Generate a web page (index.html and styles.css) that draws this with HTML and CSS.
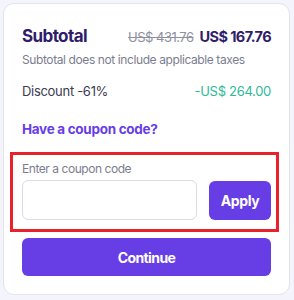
FILE: index.html
```html
<!DOCTYPE html>
<html lang="en">
<head>
<meta charset="utf-8">
<title>Order summary</title>
<link rel="stylesheet" href="styles.css">
</head>
<body>
<div class="card">
  <div class="row subtotal-row">
    <span class="subtotal">Subtotal</span>
    <span class="prices"><s class="old">US$ 431.76</s><span class="new">US$ 167.76</span></span>
  </div>
  <p class="note">Subtotal does not include applicable taxes</p>
  <div class="row discount-row">
    <span class="discount">Discount -61%</span>
    <span class="saving">-US$ 264.00</span>
  </div>
  <a class="coupon-link" href="#">Have a coupon code?</a>
  <div class="coupon">
    <label class="coupon-label" for="code">Enter a coupon code</label>
    <div class="coupon-form">
      <input id="code" class="coupon-input" type="text">
      <button class="apply" type="button">Apply</button>
    </div>
  </div>
  <button class="continue" type="button">Continue</button>
</div>
</body>
</html>
```
FILE: styles.css
```css
html, body {
  margin: 0;
  padding: 0;
}
body {
  background: #f4f4fc;
  font-family: Inter, "DejaVu Sans", sans-serif;
  padding: 3px;
  width: 294px;
  height: 300px;
  box-sizing: border-box;
}
.card {
  box-sizing: border-box;
  width: 287px;
  height: 292px;
  background: #fff;
  border: 1px solid #e3e3ee;
  border-radius: 11px;
  padding: 20px 18px 18px;
  display: flex;
  flex-direction: column;
}
.row {
  display: flex;
  justify-content: space-between;
  align-items: baseline;
}
.subtotal {
  font-size: 17px;
  font-weight: 700;
  letter-spacing: -0.6px;
  color: #2f1c6a;
  line-height: 24px;
}
.prices {
  display: flex;
  gap: 6px;
  align-items: baseline;
}
.old {
  font-size: 13px;
  letter-spacing: -0.5px;
  color: #8e90a0;
}
.new {
  font-size: 14.5px;
  font-weight: 700;
  letter-spacing: -0.6px;
  color: #2f1c6a;
}
.note {
  margin: 4px 0 0;
  font-size: 12px;
  letter-spacing: -0.4px;
  line-height: 16px;
  color: #7b7d8f;
}
.discount-row {
  margin-top: 14px;
  font-size: 13px;
  letter-spacing: -0.3px;
  line-height: 18px;
}
.discount {
  color: #3c3b51;
}
.saving {
  color: #2dba96;
}
.coupon-link {
  margin-top: 20px;
  font-size: 13.5px;
  letter-spacing: -0.3px;
  line-height: 18px;
  font-weight: 700;
  color: #673de6;
  text-decoration: none;
}
.coupon {
  position: relative;
  margin-top: 23px;
}
.coupon::after {
  content: "";
  position: absolute;
  top: -9px;
  left: -12px;
  right: -8px;
  bottom: -12px;
  border: 3px solid #e8212b;
  pointer-events: none;
}
.coupon-label {
  display: block;
  font-size: 12px;
  letter-spacing: -0.45px;
  line-height: 16px;
  color: #7b7d8f;
}
.coupon-form {
  display: flex;
  gap: 12px;
  margin-top: 3px;
}
.coupon-input {
  flex: 1;
  min-width: 0;
  height: 40px;
  box-sizing: border-box;
  border: 1px solid #dadce5;
  border-radius: 6px;
  background: #fff;
  font: inherit;
}
.apply {
  width: 62px;
  height: 39px;
  margin-top: 1px;
  border: 0;
  border-radius: 6px;
  background: #673de6;
  color: #fff;
  font-family: inherit;
  font-size: 14px;
  letter-spacing: -0.4px;
  font-weight: 700;
}
.continue {
  margin-top: 18px;
  height: 39px;
  border: 0;
  border-radius: 6px;
  background: #673de6;
  color: #fff;
  font-family: inherit;
  font-size: 14px;
  letter-spacing: -0.6px;
  font-weight: 700;
}
```
